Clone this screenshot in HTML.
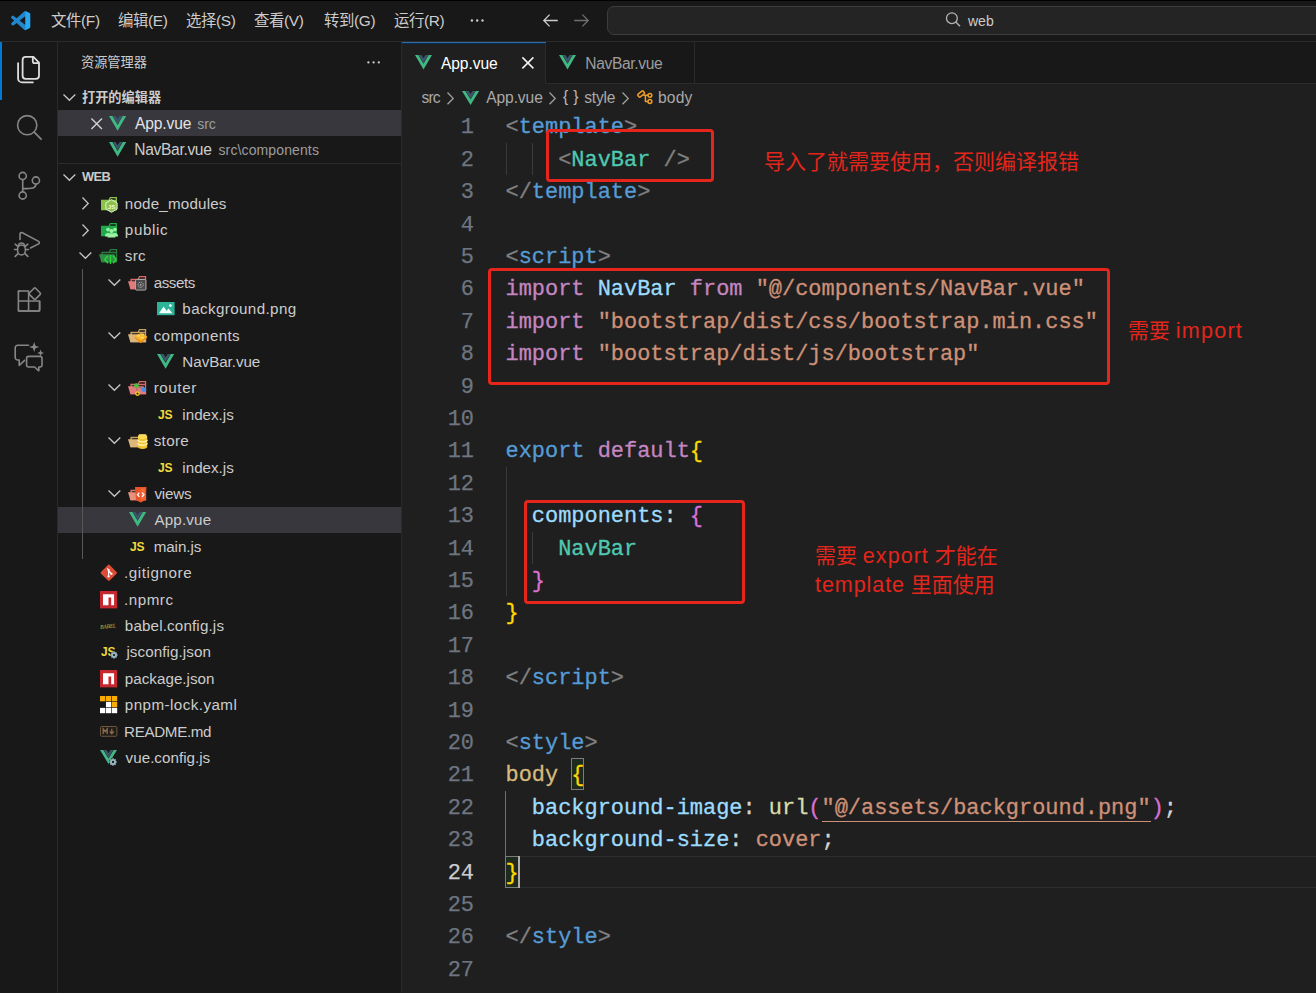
<!DOCTYPE html>
<html lang="zh-CN"><head><meta charset="utf-8"><title>App.vue - web</title>
<style>
*{box-sizing:border-box;margin:0;padding:0}
html,body{width:1316px;height:993px;overflow:hidden;background:#181818}
body{position:relative;font-family:"Liberation Sans","Noto Sans CJK SC",sans-serif;color:#ccc;font-size:15.6px}
.abs,svg{position:absolute}
svg{overflow:visible}
#title{position:absolute;left:0;top:0;width:1316px;height:42px;background:#181818}
.menu{position:absolute;top:0;height:41px;line-height:41px;font-size:15.4px;color:#ccc;white-space:nowrap;letter-spacing:-0.35px}
#search{position:absolute;left:607px;top:6px;width:760px;height:29px;background:#242424;border:1px solid #3d3d3d;border-radius:7px}
#act{position:absolute;left:0;top:42px;width:58px;height:951px;background:#181818;border-right:1px solid #2b2b2b}
#side{position:absolute;left:58px;top:42px;width:344px;height:951px;background:#181818;border-right:1px solid #2b2b2b}
#ed{position:absolute;left:402px;top:42px;width:914px;height:951px;background:#1f1f1f}
#tabs{position:absolute;left:402px;top:42px;width:914px;height:42px;background:#181818;border-bottom:1px solid #2b2b2b}
.tab{position:absolute;top:42px;height:42px;border-right:1px solid #2b2b2b}
.tab.on{background:#1f1f1f;height:42px}
.t{position:absolute;white-space:nowrap;line-height:26.4px;height:26.4px}
.row{position:absolute;left:58px;width:343px;height:25.9px}
.row.sel{background:#37373d}
.ln{-webkit-text-stroke:0.25px;position:absolute;left:402px;width:72px;text-align:right;font-family:"Liberation Mono",monospace;font-size:21.94px;line-height:32.4px;height:32.4px;color:#6e7681;white-space:pre}
.cl{-webkit-text-stroke:0.3px;position:absolute;left:505.5px;font-family:"Liberation Mono",monospace;font-size:21.94px;line-height:32.4px;height:32.4px;color:#ccc;white-space:pre}
.rb{position:absolute;border:3.5px solid #e6261d;border-radius:4px}
.rt{position:absolute;color:#e3261c;white-space:nowrap;font-size:21px;line-height:28px}
.g{position:absolute;width:1px;background:#3a3a3a}
</style></head>
<body>
<div id="title"></div><div id="act"></div><div id="side"></div><div id="ed"></div><div id="tabs"></div>
<div class="abs" style="left:0;top:0;width:1316px;height:1px;background:#000"></div>
<div class="abs" style="left:0;top:41px;width:1316px;height:1px;background:#2b2b2b"></div>
<svg style="left:10.90px;top:10.90px" width="19.20" height="19.20" viewBox="0 0 100 100" ><path d="M96.46 10.8 75.86.88a6.23 6.23 0 0 0-7.1 1.2L29.35 38.04 12.19 25.01a4.16 4.16 0 0 0-5.32.24L1.36 30.26a4.17 4.17 0 0 0 0 6.16L16.25 50 1.36 63.58a4.17 4.17 0 0 0 0 6.16l5.5 5a4.16 4.16 0 0 0 5.33.24l17.16-13.02 39.42 35.96a6.22 6.22 0 0 0 7.1 1.2l20.59-9.9A6.25 6.25 0 0 0 100 83.58V16.42a6.25 6.25 0 0 0-3.54-5.63ZM75.01 72.7 45.1 50l29.9-22.7Z" fill="#1f87cf"/><path d="M75.86.88 96.46 10.8A6.25 6.25 0 0 1 100 16.42V83.58a6.25 6.25 0 0 1-3.54 5.64l-20.59 9.9a6.22 6.22 0 0 1-2.9.6 4 4 0 0 0 2.04-3.5V3.8A4 4 0 0 0 72.9.3a6.2 6.2 0 0 1 2.96.58Z" fill="#2aa7ee"/></svg>
<div class="menu" style="left:51px">文件(F)</div>
<div class="menu" style="left:118px">编辑(E)</div>
<div class="menu" style="left:186px">选择(S)</div>
<div class="menu" style="left:254px">查看(V)</div>
<div class="menu" style="left:324px">转到(G)</div>
<div class="menu" style="left:394px">运行(R)</div>
<svg style="left:468.00px;top:16.00px" width="20.00" height="9.00" viewBox="0 0 20 9" ><g fill="#ccc"><circle cx="3.9" cy="4.5" r="1.2"/><circle cx="9.2" cy="4.5" r="1.2"/><circle cx="14.5" cy="4.5" r="1.2"/></g></svg>
<svg style="left:543.00px;top:14.00px" width="15.00" height="13.00" viewBox="0 0 15 13" ><path d="M14.8,6.5 H1 M6.6,0.6 L0.8,6.5 L6.6,12.4" fill="none" stroke="#ccc" stroke-width="1.3"/></svg>
<svg style="left:574.00px;top:14.00px" width="15.00" height="13.00" viewBox="0 0 15 13" ><path d="M0.2,6.5 H14 M8.4,0.6 L14.2,6.5 L8.4,12.4" fill="none" stroke="#6f6f6f" stroke-width="1.3"/></svg>
<div id="search"></div>
<svg style="left:944.00px;top:10.00px" width="18.00" height="18.00" viewBox="0 0 18 18" ><circle cx="7.9" cy="8.2" r="5.4" fill="none" stroke="#b4b4b4" stroke-width="1.3"/><path d="M11.8,12.1 L16,16.2" stroke="#b4b4b4" stroke-width="1.4"/></svg>
<div class="menu" style="left:968px;top:1.2px;font-size:14px;color:#ccc;letter-spacing:0">web</div>
<div class="abs" style="left:0;top:42px;width:2.4px;height:57.6px;background:#0078d4"></div>
<svg style="left:16.00px;top:55.00px" width="26.00" height="30.00" viewBox="0 0 26 30" ><path d="M9.6,1.9 H17.4 L23,7.5 V20.8 A3,3 0 0 1 20,23.8 H9.6 A3,3 0 0 1 6.6,20.8 V4.9 A3,3 0 0 1 9.6,1.9 Z M16.8,2.1 V6.2 A2,2 0 0 0 18.8,8.2 H22.8" fill="none" stroke="#dedede" stroke-width="1.8"/><path d="M2.1,7.6 V23.4 A4,4 0 0 0 6.1,27.4 H17.6" fill="none" stroke="#dedede" stroke-width="1.8"/></svg>
<svg style="left:14.00px;top:112.00px" width="30.00" height="30.00" viewBox="0 0 30 30" ><circle cx="13.2" cy="13.2" r="9.6" fill="none" stroke="#868686" stroke-width="1.6"/><path d="M20.2,20.2 L27.6,27.6" stroke="#868686" stroke-width="1.7"/></svg>
<svg style="left:14.00px;top:168.00px" width="30.00" height="32.00" viewBox="0 0 30 32" ><g fill="none" stroke="#868686" stroke-width="1.6"><circle cx="8.7" cy="8" r="3.6"/><circle cx="8.7" cy="27.5" r="3.6"/><circle cx="21.9" cy="12.5" r="3.6"/><path d="M8.7,11.6 V23.9 M21.9,16.1 C21.9,20.4 18.5,20.6 8.7,20.6"/></g></svg>
<svg style="left:13.00px;top:230.00px" width="30.00" height="30.00" viewBox="0 0 30 30" ><g fill="none" stroke="#868686" stroke-width="1.6" stroke-linejoin="round" stroke-linecap="round"><path d="M7,9.5 V4.2 A1.6,1.6 0 0 1 9.4,2.8 L25.6,11.4 A1.4,1.4 0 0 1 25.6,13.9 L17.5,18"/><ellipse cx="8.5" cy="20" rx="4" ry="5"/><path d="M5.4,15.4 A3.2,3.2 0 0 1 11.6,15.4 M4.5,19.5 H1.5 M12.5,19.5 H15.5 M5,23.6 L2.2,26.4 M12,23.6 L14.8,26.4 M5,16.6 L2.2,14.2 M12,16.6 L14.8,14.2"/></g></svg>
<svg style="left:16.00px;top:286.00px" width="28.00" height="28.00" viewBox="0 0 28 28" ><g fill="none" stroke="#868686" stroke-width="1.6" stroke-linejoin="round"><path d="M2.4,5 H12.6 V25 H2.4 Z M2.4,15 H23.6 V25 H12.6"/><path d="M2.4,6.4 A1.6,1.6 0 0 1 4,4.8 M23.6,15 V23.4 A1.6,1.6 0 0 1 22,25 H4 A1.6,1.6 0 0 1 2.4,23.4" /><rect x="14.4" y="3.3" width="8.8" height="8.8" rx="1.4" transform="rotate(45 18.8 7.7)"/></g></svg>
<svg style="left:13.00px;top:341.00px" width="32.00" height="32.00" viewBox="0 0 32 32" ><g fill="none" stroke="#868686" stroke-width="1.6" stroke-linejoin="round" stroke-linecap="round"><path d="M15.5,4.2 H4.8 A2.6,2.6 0 0 0 2.2,6.8 V16.4 A2.6,2.6 0 0 0 4.8,19 H6.2 V24.4 L11.6,19.4"/><path d="M15.6,15.4 H27 A2,2 0 0 1 29,17.4 V24 A2,2 0 0 1 27,26 H25.8 V29.8 L21.6,26 H15.6 A2,2 0 0 1 13.6,24 V17.4 A2,2 0 0 1 15.6,15.4 Z"/></g><path d="M21.2,1 L22.5,4.7 L26.2,6 L22.5,7.3 L21.2,11 L19.9,7.3 L16.2,6 L19.9,4.7 Z M27.6,8.6 L28.5,11.1 L31,12 L28.5,12.9 L27.6,15.4 L26.7,12.9 L24.2,12 L26.7,11.1 Z" fill="#868686"/></svg>
<div class="t" style="left:81px;top:49.6px;font-size:13.2px;color:#ccc">资源管理器</div>
<svg style="left:366.00px;top:59.00px" width="16.00" height="7.00" viewBox="0 0 16 7" ><g fill="#ccc"><circle cx="2.4" cy="3.4" r="1.15"/><circle cx="7.6" cy="3.4" r="1.15"/><circle cx="12.8" cy="3.4" r="1.15"/></g></svg>
<div class="t" style="left:82px;top:84.6px;font-size:13.2px;font-weight:bold;color:#ccc">打开的编辑器</div>
<svg style="left:63.40px;top:94.40px" width="12.80" height="6.80" viewBox="0 0 12.8 6.8" ><polyline points="0.5,0.5 6.4,6.2 12.3,0.5" fill="none" stroke="#c5c5c5" stroke-width="1.35"/></svg>
<div class="row sel" style="top:110.10000000000001px"></div>
<svg style="left:90.70px;top:117.80px" width="11.40" height="11.40" viewBox="0 0 11.4 11.4" ><path d="M0.4,0.4 L11.0,11.0 M11.0,0.4 L0.4,11.0" fill="none" stroke="#d4d4d4" stroke-width="1.35"/></svg>
<svg style="left:108.90px;top:115.70px" width="17.20" height="14.80" viewBox="0 0 100 86.6" preserveAspectRatio="none"><polygon points="0,0 20,0 50,52 80,0 100,0 50,86.6" fill="#41b883"/><polygon points="21,0 38.5,0 50,19 61.5,0 79,0 50,49" fill="#3a5468"/></svg>
<div class="t" style="left:135px;top:111.0px;color:#e4e4e4;letter-spacing:-0.15px">App.vue</div>
<div class="t" style="left:197.2px;top:111.3px;font-size:14px;color:#9d9d9d">src</div>
<svg style="left:108.90px;top:142.10px" width="17.20" height="14.80" viewBox="0 0 100 86.6" preserveAspectRatio="none"><polygon points="0,0 20,0 50,52 80,0 100,0 50,86.6" fill="#41b883"/><polygon points="21,0 38.5,0 50,19 61.5,0 79,0 50,49" fill="#3a5468"/></svg>
<div class="t" style="left:134.3px;top:137.4px;letter-spacing:-0.34px">NavBar.vue</div>
<div class="t" style="left:218.5px;top:136.5px;font-size:14px;color:#9d9d9d;letter-spacing:0.12px">src\components</div>
<div class="abs" style="left:58px;top:162.6px;width:343px;height:1px;background:#2b2b2b"></div>
<div class="t" style="left:82px;top:164.0px;font-size:12.8px;font-weight:bold;letter-spacing:-0.55px">WEB</div>
<svg style="left:63.40px;top:173.50px" width="12.80" height="6.80" viewBox="0 0 12.8 6.8" ><polyline points="0.5,0.5 6.4,6.2 12.3,0.5" fill="none" stroke="#c5c5c5" stroke-width="1.35"/></svg>
<div class="row sel" style="top:506.7px"></div>
<div class="g" style="left:82px;top:268.79999999999995px;height:290.4px;background:#585858"></div>
<div class="t" style="left:124.80px;top:190.6px;font-size:15.2px;letter-spacing:0.182px">node_modules</div>
<svg style="left:82.20px;top:197.30px" width="6.80" height="12.80" viewBox="0 0 6.8 12.8" ><polyline points="0.5,0.5 6.2,6.4 0.5,12.3" fill="none" stroke="#c5c5c5" stroke-width="1.35"/></svg>
<div class="t" style="left:124.80px;top:217.0px;font-size:15.2px;letter-spacing:0.640px">public</div>
<svg style="left:82.20px;top:223.70px" width="6.80" height="12.80" viewBox="0 0 6.8 12.8" ><polyline points="0.5,0.5 6.2,6.4 0.5,12.3" fill="none" stroke="#c5c5c5" stroke-width="1.35"/></svg>
<div class="t" style="left:124.80px;top:243.39999999999998px;font-size:15.2px;letter-spacing:0.300px">src</div>
<svg style="left:79.10px;top:252.40px" width="12.80" height="6.80" viewBox="0 0 12.8 6.8" ><polyline points="0.5,0.5 6.4,6.2 12.3,0.5" fill="none" stroke="#c5c5c5" stroke-width="1.35"/></svg>
<div class="t" style="left:153.66px;top:269.79999999999995px;font-size:15.2px;letter-spacing:-0.420px">assets</div>
<svg style="left:107.80px;top:278.80px" width="12.80" height="6.80" viewBox="0 0 12.8 6.8" ><polyline points="0.5,0.5 6.4,6.2 12.3,0.5" fill="none" stroke="#c5c5c5" stroke-width="1.35"/></svg>
<div class="t" style="left:182.36px;top:296.2px;font-size:15.2px;letter-spacing:0.379px">background.png</div>
<div class="t" style="left:153.66px;top:322.6px;font-size:15.2px;letter-spacing:0.369px">components</div>
<svg style="left:107.80px;top:331.60px" width="12.80" height="6.80" viewBox="0 0 12.8 6.8" ><polyline points="0.5,0.5 6.4,6.2 12.3,0.5" fill="none" stroke="#c5c5c5" stroke-width="1.35"/></svg>
<div class="t" style="left:182.36px;top:349.0px;font-size:15.2px;letter-spacing:-0.064px">NavBar.vue</div>
<div class="t" style="left:153.66px;top:375.4px;font-size:15.2px;letter-spacing:0.580px">router</div>
<svg style="left:107.80px;top:384.40px" width="12.80" height="6.80" viewBox="0 0 12.8 6.8" ><polyline points="0.5,0.5 6.4,6.2 12.3,0.5" fill="none" stroke="#c5c5c5" stroke-width="1.35"/></svg>
<div class="t" style="left:182.36px;top:401.79999999999995px;font-size:15.2px;letter-spacing:-0.016px">index.js</div>
<div class="t" style="left:153.66px;top:428.2px;font-size:15.2px;letter-spacing:0.350px">store</div>
<svg style="left:107.80px;top:437.20px" width="12.80" height="6.80" viewBox="0 0 12.8 6.8" ><polyline points="0.5,0.5 6.4,6.2 12.3,0.5" fill="none" stroke="#c5c5c5" stroke-width="1.35"/></svg>
<div class="t" style="left:182.36px;top:454.59999999999997px;font-size:15.2px;letter-spacing:-0.016px">index.js</div>
<div class="t" style="left:154.46px;top:481.0px;font-size:15.2px;letter-spacing:-0.200px">views</div>
<svg style="left:107.80px;top:490.00px" width="12.80" height="6.80" viewBox="0 0 12.8 6.8" ><polyline points="0.5,0.5 6.4,6.2 12.3,0.5" fill="none" stroke="#c5c5c5" stroke-width="1.35"/></svg>
<div class="t" style="left:154.46px;top:507.4px;font-size:15.2px;letter-spacing:0.151px">App.vue</div>
<div class="t" style="left:153.66px;top:533.8px;font-size:15.2px;letter-spacing:-0.067px">main.js</div>
<div class="t" style="left:124.00px;top:560.2px;font-size:15.2px;letter-spacing:0.579px">.gitignore</div>
<div class="t" style="left:124.00px;top:586.5999999999999px;font-size:15.2px;letter-spacing:0.520px">.npmrc</div>
<div class="t" style="left:124.80px;top:613.0px;font-size:15.2px;letter-spacing:0.149px">babel.config.js</div>
<div class="t" style="left:126.40px;top:639.4px;font-size:15.2px;letter-spacing:0.074px">jsconfig.json</div>
<div class="t" style="left:124.80px;top:665.8px;font-size:15.2px;letter-spacing:0.020px">package.json</div>
<div class="t" style="left:124.80px;top:692.1999999999999px;font-size:15.2px;letter-spacing:0.438px">pnpm-lock.yaml</div>
<div class="t" style="left:124.00px;top:718.5999999999999px;font-size:15.2px;letter-spacing:-0.342px">README.md</div>
<div class="t" style="left:125.60px;top:745.0px;font-size:15.2px;letter-spacing:0.016px">vue.config.js</div>
<svg style="left:101.20px;top:196.90px" width="16.00" height="13.20" viewBox="0 0 16 13.2" ><path d="M0,2.8 H7.6 L8.9,0 H16 V13.2 H0 Z M9.6,1.3 L8.9,2.8 H14.7 V1.3 Z" fill="#8bc34a" fill-rule="evenodd"/></svg>
<svg style="left:105.10px;top:199.20px" width="13.00" height="14.00" viewBox="0 0 13 14" ><path d="M6.5,0.7 L12.1,3.9 V10.1 L6.5,13.3 L0.9,10.1 V3.9 Z" fill="#8bc34a" stroke="#e6f2d6" stroke-width="1"/><text x="6.6" y="9.6" font-family="Liberation Sans,sans-serif" font-weight="bold" font-size="6.2" fill="#eef7e2" text-anchor="middle">JS</text></svg>
<svg style="left:101.20px;top:222.90px" width="16.00" height="13.20" viewBox="0 0 16 13.2" ><path d="M0,2.8 H7.6 L8.9,0 H16 V13.2 H0 Z M9.6,1.3 L8.9,2.8 H14.7 V1.3 Z" fill="#1faa4a" fill-rule="evenodd"/></svg>
<svg style="left:105.00px;top:226.60px" width="13.00" height="10.50" viewBox="0 0 13 10.5" ><g fill="#9af0a4"><circle cx="3" cy="2.6" r="1.8"/><circle cx="10" cy="2.6" r="1.8"/><circle cx="6.5" cy="4" r="2.1"/><path d="M0,9.4 A3,3.4 0 0 1 6,9.4 Z M7,9.4 A3,3.4 0 0 1 13,9.4 Z"/><path d="M2.6,10.5 A3.9,4.2 0 0 1 10.4,10.5 Z"/></g></svg>
<svg style="left:99.20px;top:249.00px" width="18.20" height="13.20" viewBox="0 0 18.2 13.2" ><path d="M2.4,2.8 H9.8 L11.1,0 H18.2 V13.2 H2.4 Z M11.8,1.3 L11.1,2.8 H16.9 V1.3 Z M3.9,4.2 V11.8 H16.9 V4.2 Z" fill="#2a7a3e" fill-rule="evenodd"/><path d="M0,5.2 H15.6 L18.2,13.2 H2.4 Z" fill="#2f8b47"/></svg>
<svg style="left:104.40px;top:254.80px" width="13.00" height="9.00" viewBox="0 0 13 9" ><path d="M4,0.8 L0.9,4.5 L4,8.2 M9,0.8 L12.1,4.5 L9,8.2 M6.5,0 V9" fill="none" stroke="#2fd23a" stroke-width="1.5"/></svg>
<svg style="left:128.00px;top:276.10px" width="18.20" height="13.20" viewBox="0 0 18.2 13.2" ><path d="M2.4,2.8 H9.8 L11.1,0 H18.2 V13.2 H2.4 Z M11.8,1.3 L11.1,2.8 H16.9 V1.3 Z M3.9,4.2 V11.8 H16.9 V4.2 Z" fill="#d96a6a" fill-rule="evenodd"/><path d="M0,5.2 H15.6 L18.2,13.2 H2.4 Z" fill="#e27b7b"/></svg>
<svg style="left:134.60px;top:279.40px" width="11.40" height="11.60" viewBox="0 0 11.4 11.6" ><rect x="0.5" y="0.5" width="10.4" height="10.6" rx="1" fill="#4a4a4a" stroke="#a8a8a8" stroke-width="1"/><circle cx="5.7" cy="5.8" r="2.6" fill="none" stroke="#b4b4b4" stroke-width="1" stroke-dasharray="1.2 0.8"/><circle cx="5.7" cy="5.8" r="0.9" fill="#b4b4b4"/></svg>
<svg style="left:156.90px;top:301.90px" width="17.60" height="13.20" viewBox="0 0 17.6 13.2" ><rect width="17.6" height="13.2" fill="#2db398"/><path d="M2,11.2 L6.6,4.6 L9.6,8.8 L11.6,6.6 L15.4,11.2 Z" fill="#f2fffb"/><circle cx="13.4" cy="3.6" r="1.4" fill="#f2fffb"/></svg>
<svg style="left:128.00px;top:328.50px" width="18.20" height="13.20" viewBox="0 0 18.2 13.2" ><path d="M2.4,2.8 H9.8 L11.1,0 H18.2 V13.2 H2.4 Z M11.8,1.3 L11.1,2.8 H16.9 V1.3 Z M3.9,4.2 V11.8 H16.9 V4.2 Z" fill="#c9a063" fill-rule="evenodd"/><path d="M0,5.2 H15.6 L18.2,13.2 H2.4 Z" fill="#dcb67a"/></svg>
<svg style="left:133.60px;top:330.60px" width="13.60" height="13.40" viewBox="0 0 13.6 12" ><path d="M6.8,2.4 L13.4,6 L6.8,11.6 L0.2,6 Z" fill="#ee8d12"/><path d="M6.8,1.2 L13.4,4.8 L6.8,9.4 L0.2,4.8 Z" fill="#f8b42a"/><ellipse cx="4.6" cy="4.2" rx="1.8" ry="1.1" fill="#ffd75e"/><ellipse cx="8.8" cy="2.8" rx="1.8" ry="1.1" fill="#ffd75e"/><ellipse cx="8.2" cy="6" rx="1.8" ry="1.1" fill="#ffd75e"/></svg>
<svg style="left:157.10px;top:353.90px" width="17.20" height="14.80" viewBox="0 0 100 86.6" preserveAspectRatio="none"><polygon points="0,0 20,0 50,52 80,0 100,0 50,86.6" fill="#41b883"/><polygon points="21,0 38.5,0 50,19 61.5,0 79,0 50,49" fill="#3a5468"/></svg>
<svg style="left:128.00px;top:381.00px" width="18.20" height="13.20" viewBox="0 0 18.2 13.2" ><path d="M2.4,2.8 H9.8 L11.1,0 H18.2 V13.2 H2.4 Z M11.8,1.3 L11.1,2.8 H16.9 V1.3 Z M3.9,4.2 V11.8 H16.9 V4.2 Z" fill="#d96a6a" fill-rule="evenodd"/><path d="M0,5.2 H15.6 L18.2,13.2 H2.4 Z" fill="#e27b7b"/></svg>
<svg style="left:132.00px;top:383.00px" width="16.00" height="14.00" viewBox="0 0 16 14" ><path d="M4.4,2.6 L5.4,10.4 M4.4,2.6 L11.8,6.6" stroke="#9c6a6a" stroke-width="1"/><circle cx="4.4" cy="2.6" r="2.3" fill="#3fc43a"/><circle cx="11.9" cy="6.7" r="2.4" fill="#3f8fe8"/><circle cx="5.5" cy="10.6" r="1.7" fill="#3a2a10" stroke="#f5d21f" stroke-width="1.3"/></svg>
<div class="abs" style="left:158.10px;top:408.25px;font-size:13.41px;line-height:13.41px;font-weight:bold;color:#f0db3c;letter-spacing:-0.3px;transform:scaleX(0.904);transform-origin:0 0;white-space:nowrap">JS</div>
<svg style="left:128.00px;top:434.20px" width="18.20" height="13.20" viewBox="0 0 18.2 13.2" ><path d="M2.4,2.8 H9.8 L11.1,0 H18.2 V13.2 H2.4 Z M11.8,1.3 L11.1,2.8 H16.9 V1.3 Z M3.9,4.2 V11.8 H16.9 V4.2 Z" fill="#c9a063" fill-rule="evenodd"/><path d="M0,5.2 H15.6 L18.2,13.2 H2.4 Z" fill="#dcb67a"/></svg>
<svg style="left:137.80px;top:433.80px" width="9.20" height="15.60" viewBox="0 0 9.8 15.6" ><path d="M0,2.4 V13.2 A4.9,2.3 0 0 0 9.8,13.2 V2.4 Z" fill="#f2c530"/><ellipse cx="4.9" cy="2.4" rx="4.9" ry="2.3" fill="#f9dc58"/><path d="M0,5.6 A4.9,2.3 0 0 0 9.8,5.6 M0,9.2 A4.9,2.3 0 0 0 9.8,9.2" fill="none" stroke="#fff2ae" stroke-width="1.5"/></svg>
<div class="abs" style="left:158.10px;top:461.05px;font-size:13.41px;line-height:13.41px;font-weight:bold;color:#f0db3c;letter-spacing:-0.3px;transform:scaleX(0.904);transform-origin:0 0;white-space:nowrap">JS</div>
<svg style="left:128.00px;top:487.00px" width="18.20" height="13.20" viewBox="0 0 18.2 13.2" ><path d="M2.4,2.8 H9.8 L11.1,0 H18.2 V13.2 H2.4 Z M11.8,1.3 L11.1,2.8 H16.9 V1.3 Z M3.9,4.2 V11.8 H16.9 V4.2 Z" fill="#d97a63" fill-rule="evenodd"/><path d="M0,5.2 H15.6 L18.2,13.2 H2.4 Z" fill="#e8917c"/></svg>
<svg style="left:135.40px;top:486.80px" width="11.40" height="15.40" viewBox="0 0 11.4 15.4" ><path d="M0,0 H11.4 L10.4,13.2 L5.7,15.4 L1,13.2 Z" fill="#e8532b"/><path d="M5.7,1.2 H10.2 L9.4,12.3 L5.7,14 Z" fill="#f26a32"/><path d="M4.4,5.6 L2.4,7.7 L4.4,9.8 M7,5.6 L9,7.7 L7,9.8" fill="none" stroke="#fff" stroke-width="1.3"/></svg>
<svg style="left:128.60px;top:512.00px" width="17.20" height="14.80" viewBox="0 0 100 86.6" preserveAspectRatio="none"><polygon points="0,0 20,0 50,52 80,0 100,0 50,86.6" fill="#41b883"/><polygon points="21,0 38.5,0 50,19 61.5,0 79,0 50,49" fill="#3a5468"/></svg>
<div class="abs" style="left:129.60px;top:540.45px;font-size:13.41px;line-height:13.41px;font-weight:bold;color:#f0db3c;letter-spacing:-0.3px;transform:scaleX(0.904);transform-origin:0 0;white-space:nowrap">JS</div>
<svg style="left:99.60px;top:563.60px" width="17.60" height="17.60" viewBox="0 0 17.6 17.6" ><rect x="2.7" y="2.7" width="12.2" height="12.2" rx="1.2" transform="rotate(45 8.8 8.8)" fill="#dd4c35"/><path d="M7.2,4.4 L8.6,5.9 V12.6 M8.6,7 L11.4,9.8" fill="none" stroke="#fff" stroke-width="1.2"/><circle cx="8.6" cy="12.4" r="1.1" fill="#fff"/><circle cx="11.5" cy="9.9" r="1.1" fill="#fff"/><circle cx="8.6" cy="6.2" r="1.1" fill="#fff"/></svg>
<svg style="left:100.00px;top:590.70px" width="17.20" height="17.40" viewBox="0 0 17.2 17.4" ><rect width="17.2" height="17.4" fill="#c5282f"/><path d="M3,3.3 H14.1 V14.2 H11.2 V6.6 H8.5 V14.2 H3 Z" fill="#fff"/></svg>
<svg style="left:100.00px;top:669.90px" width="17.20" height="17.40" viewBox="0 0 17.2 17.4" ><rect width="17.2" height="17.4" fill="#c5282f"/><path d="M3,3.3 H14.1 V14.2 H11.2 V6.6 H8.5 V14.2 H3 Z" fill="#fff"/></svg>
<div class="abs" style="left:99.5px;top:620px;width:20px;height:12px;font-size:5.7px;line-height:12px;font-style:italic;color:#cdb93f;letter-spacing:-0.25px;font-family:'Liberation Serif',serif;white-space:nowrap;transform:rotate(-6deg)">BABEL</div>
<div class="abs" style="left:100.80px;top:644.80px;font-size:13.69px;line-height:13.69px;font-weight:bold;color:#f0db3c;letter-spacing:-0.3px;transform:scaleX(0.873);transform-origin:0 0;white-space:nowrap">JS</div>
<svg style="left:107.50px;top:649.40px" width="12.00" height="12.00" viewBox="-6 -6 12 12" ><circle r="3.60" fill="#181818"/><g fill="#99b8c4"><rect x="-0.75" y="-3.60" width="1.5" height="2" transform="rotate(0)"/><rect x="-0.75" y="-3.60" width="1.5" height="2" transform="rotate(45)"/><rect x="-0.75" y="-3.60" width="1.5" height="2" transform="rotate(90)"/><rect x="-0.75" y="-3.60" width="1.5" height="2" transform="rotate(135)"/><rect x="-0.75" y="-3.60" width="1.5" height="2" transform="rotate(180)"/><rect x="-0.75" y="-3.60" width="1.5" height="2" transform="rotate(225)"/><rect x="-0.75" y="-3.60" width="1.5" height="2" transform="rotate(270)"/><rect x="-0.75" y="-3.60" width="1.5" height="2" transform="rotate(315)"/></g><circle r="1.90" fill="none" stroke="#99b8c4" stroke-width="1.7"/></svg>
<svg style="left:100.00px;top:695.80px" width="17.20" height="17.20" viewBox="0 0 17.2 17.2" ><rect x="0.00" y="0.00" width="5.3" height="5.3" fill="#f9ad00"/><rect x="5.95" y="0.00" width="5.3" height="5.3" fill="#f9ad00"/><rect x="11.90" y="0.00" width="5.3" height="5.3" fill="#f9ad00"/><rect x="5.95" y="5.95" width="5.3" height="5.3" fill="#ffffff"/><rect x="11.90" y="5.95" width="5.3" height="5.3" fill="#f9ad00"/><rect x="0.00" y="11.90" width="5.3" height="5.3" fill="#ffffff"/><rect x="5.95" y="11.90" width="5.3" height="5.3" fill="#ffffff"/><rect x="11.90" y="11.90" width="5.3" height="5.3" fill="#ffffff"/></svg>
<svg style="left:100.00px;top:726.00px" width="17.40" height="10.80" viewBox="0 0 17.4 10.8" ><rect x="0.5" y="0.5" width="16.4" height="9.8" rx="1" fill="#221d17" stroke="#6b5742" stroke-width="1"/><path d="M3.2,8 V3 L5.2,5.6 L7.2,3 V8 M11.8,2.8 V7.4 M9.8,5.4 L11.8,7.8 L13.8,5.4" fill="none" stroke="#8a6e4e" stroke-width="1.3"/></svg>
<svg style="left:100.00px;top:750.20px" width="17.00" height="14.00" viewBox="0 0 100 86.6" preserveAspectRatio="none"><polygon points="0,0 20,0 50,52 80,0 100,0 50,86.6" fill="#41b883"/><polygon points="21,0 38.5,0 50,19 61.5,0 79,0 50,49" fill="#3a5468"/></svg>
<svg style="left:107.40px;top:756.10px" width="12.00" height="12.00" viewBox="-6 -6 12 12" ><circle r="3.70" fill="#181818"/><g fill="#99b8c4"><rect x="-0.75" y="-3.70" width="1.5" height="2" transform="rotate(0)"/><rect x="-0.75" y="-3.70" width="1.5" height="2" transform="rotate(45)"/><rect x="-0.75" y="-3.70" width="1.5" height="2" transform="rotate(90)"/><rect x="-0.75" y="-3.70" width="1.5" height="2" transform="rotate(135)"/><rect x="-0.75" y="-3.70" width="1.5" height="2" transform="rotate(180)"/><rect x="-0.75" y="-3.70" width="1.5" height="2" transform="rotate(225)"/><rect x="-0.75" y="-3.70" width="1.5" height="2" transform="rotate(270)"/><rect x="-0.75" y="-3.70" width="1.5" height="2" transform="rotate(315)"/></g><circle r="2.00" fill="none" stroke="#99b8c4" stroke-width="1.7"/></svg>
<div class="tab on" style="left:402px;width:144px"></div>
<div class="abs" style="left:402px;top:42px;width:143.6px;height:1px;background:#2e6da4"></div><div class="abs" style="left:402px;top:43px;width:143.6px;height:1px;background:#0a2c52"></div>
<div class="tab" style="left:546px;width:149.4px"></div>
<svg style="left:415.20px;top:55.40px" width="17.00" height="14.40" viewBox="0 0 100 86.6" preserveAspectRatio="none"><polygon points="0,0 20,0 50,52 80,0 100,0 50,86.6" fill="#41b883"/><polygon points="21,0 38.5,0 50,19 61.5,0 79,0 50,49" fill="#3a5468"/></svg>
<div class="t" style="left:441px;top:50.6px;color:#fff;letter-spacing:-0.1px">App.vue</div>
<svg style="left:522.10px;top:56.50px" width="11.80" height="11.80" viewBox="0 0 11.8 11.8" ><path d="M0.4,0.4 L11.4,11.4 M11.4,0.4 L0.4,11.4" fill="none" stroke="#f0f0f0" stroke-width="1.6"/></svg>
<svg style="left:559.30px;top:55.40px" width="17.00" height="14.40" viewBox="0 0 100 86.6" preserveAspectRatio="none"><polygon points="0,0 20,0 50,52 80,0 100,0 50,86.6" fill="#41b883"/><polygon points="21,0 38.5,0 50,19 61.5,0 79,0 50,49" fill="#3a5468"/></svg>
<div class="t" style="left:585.3px;top:50.6px;color:#9d9d9d;letter-spacing:-0.35px">NavBar.vue</div>
<div class="t" style="left:421.4px;top:84.9px;color:#a9a9a9;letter-spacing:-0.8px">src</div>
<svg style="left:447.20px;top:92.00px" width="6.80" height="12.80" viewBox="0 0 6.8 12.8" ><polyline points="0.5,0.5 6.2,6.4 0.5,12.3" fill="none" stroke="#a0a0a0" stroke-width="1.35"/></svg>
<svg style="left:461.70px;top:90.60px" width="17.10" height="14.00" viewBox="0 0 100 86.6" preserveAspectRatio="none"><polygon points="0,0 20,0 50,52 80,0 100,0 50,86.6" fill="#41b883"/><polygon points="21,0 38.5,0 50,19 61.5,0 79,0 50,49" fill="#3a5468"/></svg>
<div class="t" style="left:486.2px;top:84.9px;color:#a9a9a9;letter-spacing:-0.1px">App.vue</div>
<svg style="left:549.20px;top:92.00px" width="6.80" height="12.80" viewBox="0 0 6.8 12.8" ><polyline points="0.5,0.5 6.2,6.4 0.5,12.3" fill="none" stroke="#a0a0a0" stroke-width="1.35"/></svg>
<div class="t" style="left:563px;top:83.6px;color:#b8b8b8;font-size:15.6px;letter-spacing:5px">{}</div>
<div class="t" style="left:584.3px;top:84.9px;color:#a9a9a9;letter-spacing:-0.25px">style</div>
<svg style="left:622.40px;top:92.00px" width="6.80" height="12.80" viewBox="0 0 6.8 12.8" ><polyline points="0.5,0.5 6.2,6.4 0.5,12.3" fill="none" stroke="#a0a0a0" stroke-width="1.35"/></svg>
<svg style="left:636.60px;top:89.60px" width="16.00" height="15.00" viewBox="0 0 16 15" ><g fill="none" stroke="#ee9d28" stroke-width="1.5" stroke-linejoin="round"><rect x="1.2" y="-1.4" width="6.8" height="3.6" rx="1" transform="rotate(-38 1.2 5.8) translate(0 5.8)"/><path d="M6.4,5.2 H11 M8.4,5.2 V11.4 H11"/><circle cx="12.9" cy="5.3" r="1.9"/><circle cx="12.9" cy="11.5" r="1.9"/></g></svg>
<div class="t" style="left:658.0px;top:84.9px;color:#a9a9a9;letter-spacing:0.15px">body</div>
<div class="abs" style="left:505px;top:856.1999999999999px;width:811px;height:31.6px;border-top:1.4px solid #2c2c2c;border-bottom:1.4px solid #2c2c2c"></div>
<div class="abs" style="left:571.2px;top:758.1999999999999px;width:13.2px;height:31.6px;background:#1d2a1e;border:1px solid #7c7c7c"></div>
<div class="abs" style="left:505.2px;top:855.9999999999999px;width:14.6px;height:32px;background:#1d2a1e;border:1px solid #7c7c7c"></div>
<div class="ln" style="top:112.4px;color:#6e7681">1</div>
<div class="cl" style="top:112.4px"><span style="color:#808080">&lt;</span><span style="color:#569cd6">template</span><span style="color:#808080">&gt;</span></div>
<div class="ln" style="top:144.8px;color:#6e7681">2</div>
<div class="cl" style="top:144.8px;z-index:2">    <span style="color:#808080">&lt;</span><span style="color:#4ec9b0">NavBar</span> <span style="color:#808080">/&gt;</span></div>
<div class="ln" style="top:177.2px;color:#6e7681">3</div>
<div class="cl" style="top:177.2px"><span style="color:#808080">&lt;/</span><span style="color:#569cd6">template</span><span style="color:#808080">&gt;</span></div>
<div class="ln" style="top:209.6px;color:#6e7681">4</div>
<div class="ln" style="top:242.0px;color:#6e7681">5</div>
<div class="cl" style="top:242.0px"><span style="color:#808080">&lt;</span><span style="color:#569cd6">script</span><span style="color:#808080">&gt;</span></div>
<div class="ln" style="top:274.4px;color:#6e7681">6</div>
<div class="cl" style="top:274.4px"><span style="color:#c586c0">import</span> <span style="color:#9cdcfe">NavBar</span> <span style="color:#c586c0">from</span> <span style="color:#ce9178">"@/components/NavBar.vue"</span></div>
<div class="ln" style="top:306.79999999999995px;color:#6e7681">7</div>
<div class="cl" style="top:306.79999999999995px"><span style="color:#c586c0">import</span> <span style="color:#ce9178">"bootstrap/dist/css/bootstrap.min.css"</span></div>
<div class="ln" style="top:339.2px;color:#6e7681">8</div>
<div class="cl" style="top:339.2px"><span style="color:#c586c0">import</span> <span style="color:#ce9178">"bootstrap/dist/js/bootstrap"</span></div>
<div class="ln" style="top:371.6px;color:#6e7681">9</div>
<div class="ln" style="top:404.0px;color:#6e7681">10</div>
<div class="ln" style="top:436.4px;color:#6e7681">11</div>
<div class="cl" style="top:436.4px"><span style="color:#569cd6">export</span> <span style="color:#c586c0">default</span><span style="color:#ffd700">{</span></div>
<div class="ln" style="top:468.79999999999995px;color:#6e7681">12</div>
<div class="ln" style="top:501.19999999999993px;color:#6e7681">13</div>
<div class="cl" style="top:501.19999999999993px">  <span style="color:#9cdcfe">components</span><span style="color:#d4d4d4">:</span> <span style="color:#da70d6">{</span></div>
<div class="ln" style="top:533.6px;color:#6e7681">14</div>
<div class="cl" style="top:533.6px">    <span style="color:#4ec9b0">NavBar</span></div>
<div class="ln" style="top:566.0px;color:#6e7681">15</div>
<div class="cl" style="top:566.0px">  <span style="color:#da70d6">}</span></div>
<div class="ln" style="top:598.4px;color:#6e7681">16</div>
<div class="cl" style="top:598.4px"><span style="color:#ffd700">}</span></div>
<div class="ln" style="top:630.8px;color:#6e7681">17</div>
<div class="ln" style="top:663.1999999999999px;color:#6e7681">18</div>
<div class="cl" style="top:663.1999999999999px"><span style="color:#808080">&lt;/</span><span style="color:#569cd6">script</span><span style="color:#808080">&gt;</span></div>
<div class="ln" style="top:695.5999999999999px;color:#6e7681">19</div>
<div class="ln" style="top:728.0px;color:#6e7681">20</div>
<div class="cl" style="top:728.0px"><span style="color:#808080">&lt;</span><span style="color:#569cd6">style</span><span style="color:#808080">&gt;</span></div>
<div class="ln" style="top:760.4px;color:#6e7681">21</div>
<div class="cl" style="top:760.4px"><span style="color:#d7ba7d">body</span> <span style="color:#ffd700">{</span></div>
<div class="ln" style="top:792.8px;color:#6e7681">22</div>
<div class="cl" style="top:792.8px">  <span style="color:#9cdcfe">background-image</span><span style="color:#d4d4d4">:</span> <span style="color:#dcdcaa">url</span><span style="color:#da70d6">(</span><span style="color:#ce9178">"@/assets/background.png"</span><span style="color:#da70d6">)</span><span style="color:#d4d4d4">;</span></div>
<div class="ln" style="top:825.1999999999999px;color:#6e7681">23</div>
<div class="cl" style="top:825.1999999999999px">  <span style="color:#9cdcfe">background-size</span><span style="color:#d4d4d4">:</span> <span style="color:#ce9178">cover</span><span style="color:#d4d4d4">;</span></div>
<div class="ln" style="top:857.5999999999999px;color:#cccccc">24</div>
<div class="cl" style="top:857.5999999999999px"><span style="color:#ffd700">}</span></div>
<div class="ln" style="top:889.9999999999999px;color:#6e7681">25</div>
<div class="ln" style="top:922.4px;color:#6e7681">26</div>
<div class="cl" style="top:922.4px"><span style="color:#808080">&lt;/</span><span style="color:#569cd6">style</span><span style="color:#808080">&gt;</span></div>
<div class="ln" style="top:954.8px;color:#6e7681">27</div>
<div class="g" style="left:506px;top:142.8px;height:32.4px"></div>
<div class="g" style="left:532px;top:142.8px;height:32.4px"></div>
<div class="g" style="left:506px;top:466.79999999999995px;height:129.6px"></div>
<div class="g" style="left:532px;top:531.6px;height:32.4px"></div>
<div class="g" style="left:505.4px;top:790.8px;height:64.8px;background:#6f6f6f"></div>
<div class="abs" style="left:517.8px;top:855.9999999999999px;width:2.4px;height:32px;background:#aeafad"></div>
<div class="abs" style="left:821.6px;top:820.9px;width:329.6px;height:1.4px;background:#ce9178"></div>
<div class="rb" style="left:546px;top:129.4px;width:168.3px;height:52.5px"></div>
<div class="rb" style="left:487.6px;top:268.1px;width:622.4px;height:117.2px"></div>
<div class="rb" style="left:524.3px;top:500.4px;width:220.7px;height:104.1px"></div>
<div class="rt" style="left:764px;top:148px">导入了就需要使用，否则编译报错</div>
<div class="rt" style="left:1128px;top:317px">需要 <span style="font-size:21.6px;letter-spacing:1.2px">import</span></div>
<div class="rt" style="left:815px;top:542px">需要 <span style="font-size:21.6px;letter-spacing:1.0px">export</span> 才能在</div>
<div class="rt" style="left:815px;top:570.6px"><span style="font-size:21.6px;letter-spacing:0.9px">template</span> 里面使用</div>
</body></html>
